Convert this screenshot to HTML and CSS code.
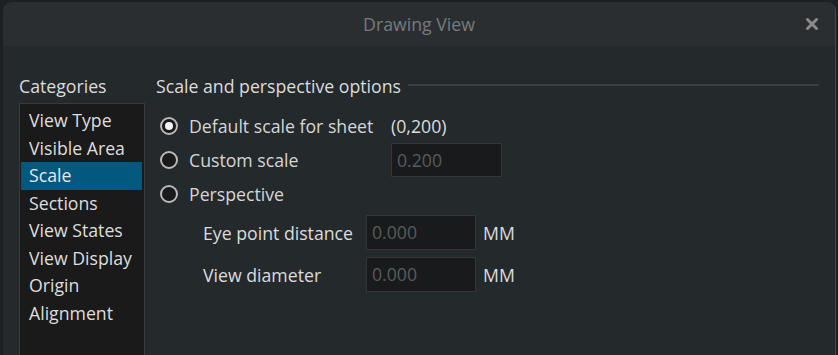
FILE: index.html
```html
<!DOCTYPE html>
<html>
<head>
<meta charset="utf-8">
<link rel="stylesheet" href="styles.css">
</head>
<body>
<div class="dialog">
  <div class="titlebar">
    <span class="title">Drawing View</span>
    <span class="close">
      <svg width="12" height="12" viewBox="0 0 12 12"><path d="M1.5 1.5 L10.5 10.5 M10.5 1.5 L1.5 10.5" stroke="#8a8a8a" stroke-width="3" stroke-linecap="round"/></svg>
    </span>
  </div>
  <div class="content">
    <div class="left">
      <div class="cat-label">Categories</div>
      <div class="listbox">
        <div class="item">View Type</div>
        <div class="item">Visible Area</div>
        <div class="item selected">Scale</div>
        <div class="item">Sections</div>
        <div class="item">View States</div>
        <div class="item">View Display</div>
        <div class="item">Origin</div>
        <div class="item">Alignment</div>
      </div>
    </div>
    <div class="right">
      <div class="group-head"><span>Scale and perspective options</span><div class="rule"></div></div>
      <div class="radio-row">
        <div class="radio-cell"><span class="radio checked"></span><span>Default scale for sheet</span></div>
        <div class="value">(0,200)</div>
      </div>
      <div class="radio-row">
        <div class="radio-cell"><span class="radio"></span><span>Custom scale</span></div>
        <div class="field w111">0.200</div>
      </div>
      <div class="radio-row">
        <div class="radio-cell"><span class="radio"></span><span>Perspective</span></div>
      </div>
      <div class="sub-rows">
        <div class="sub-row">
          <span class="sub-label">Eye point distance</span>
          <div class="field">0.000</div>
          <span class="unit">MM</span>
        </div>
        <div class="sub-row">
          <span class="sub-label">View diameter</span>
          <div class="field">0.000</div>
          <span class="unit">MM</span>
        </div>
      </div>
    </div>
  </div>
</div>
</body>
</html>
```

FILE: styles.css
```css
* { box-sizing: border-box; }
html, body { margin: 0; height: 100%; }
body {
  background: #1c2024;
  font-family: "Open Sans", "Noto Sans", sans-serif;
  color: #d6d6d6;
  font-size: 17.7px;
  overflow: hidden;
}
.dialog {
  margin: 2px 2px 0 3px;
  height: 353px;
  background: #24292c;
  border-radius: 9px 9px 0 0;
  border-right: 1px solid #45484b;
  overflow: hidden;
}
.titlebar {
  height: 45px;
  background: #2b2e31;
  border-bottom: 1px solid #272a2d;
  display: flex;
  align-items: center;
  justify-content: center;
  position: relative;
}
.title {
  color: #777a7c;
  font-size: 17.7px;
  margin-top: 0;
}
.close {
  position: absolute;
  right: 17px;
  top: 16px;
  width: 12px;
  height: 12px;
  display: flex;
}
.content {
  display: flex;
  padding: 27px 16px 0 16px;
  gap: 11px;
}
.left { width: 126px; display: flex; flex-direction: column; }
.cat-label {
  height: 24px;
  line-height: 24px;
  color: #dcdcdc;
  margin-bottom: 5px;
}
.listbox {
  background: #1a1a1a;
  border: 1px solid #3a3a3a;
  padding: 3px 2px 0 1px;
  height: 260px;
}
.item {
  height: 27.5px;
  line-height: 27.5px;
  padding-left: 8px;
  color: #dedede;
  white-space: nowrap;
}
.item.selected { background: #03587f; color: #e8e8e8; }
.right { flex: 1; display: flex; flex-direction: column; }
.group-head {
  height: 24px;
  display: flex;
  align-items: center;
  gap: 7px;
  color: #dcdcdc;
  margin-bottom: 11px;
}
.rule { flex: 1; height: 2px; background: #3a3e42; margin-top: -3px; }
.radio-row {
  height: 34px;
  display: flex;
  align-items: center;
  padding-left: 4px;
}
.radio-cell {
  width: 231px;
  display: flex;
  align-items: center;
  gap: 11px;
}
.radio {
  width: 18px;
  height: 18px;
  border-radius: 50%;
  border: 2px solid #b9b9b9;
  background: #1a1a1a;
  display: flex;
  align-items: center;
  justify-content: center;
  flex: none;
}
.radio.checked::after {
  content: "";
  width: 8px;
  height: 8px;
  border-radius: 50%;
  background: #f2f2f2;
}
.value { color: #dcdcdc; }
.field {
  width: 110px;
  height: 35px;
  background: #191a1b;
  border: 1px solid #343638;
  color: #585b5d;
  padding-left: 5px;
  line-height: 33px;
}
.field.w111 { width: 111px; height: 34px; line-height: 32px; }
.sub-rows {
  margin-top: 4px;
  display: flex;
  flex-direction: column;
  gap: 7px;
  padding-left: 47px;
}
.sub-row { display: flex; align-items: center; }
.sub-label { width: 163px; color: #dcdcdc; }
.unit { margin-left: 7px; color: #dcdcdc; }
```
